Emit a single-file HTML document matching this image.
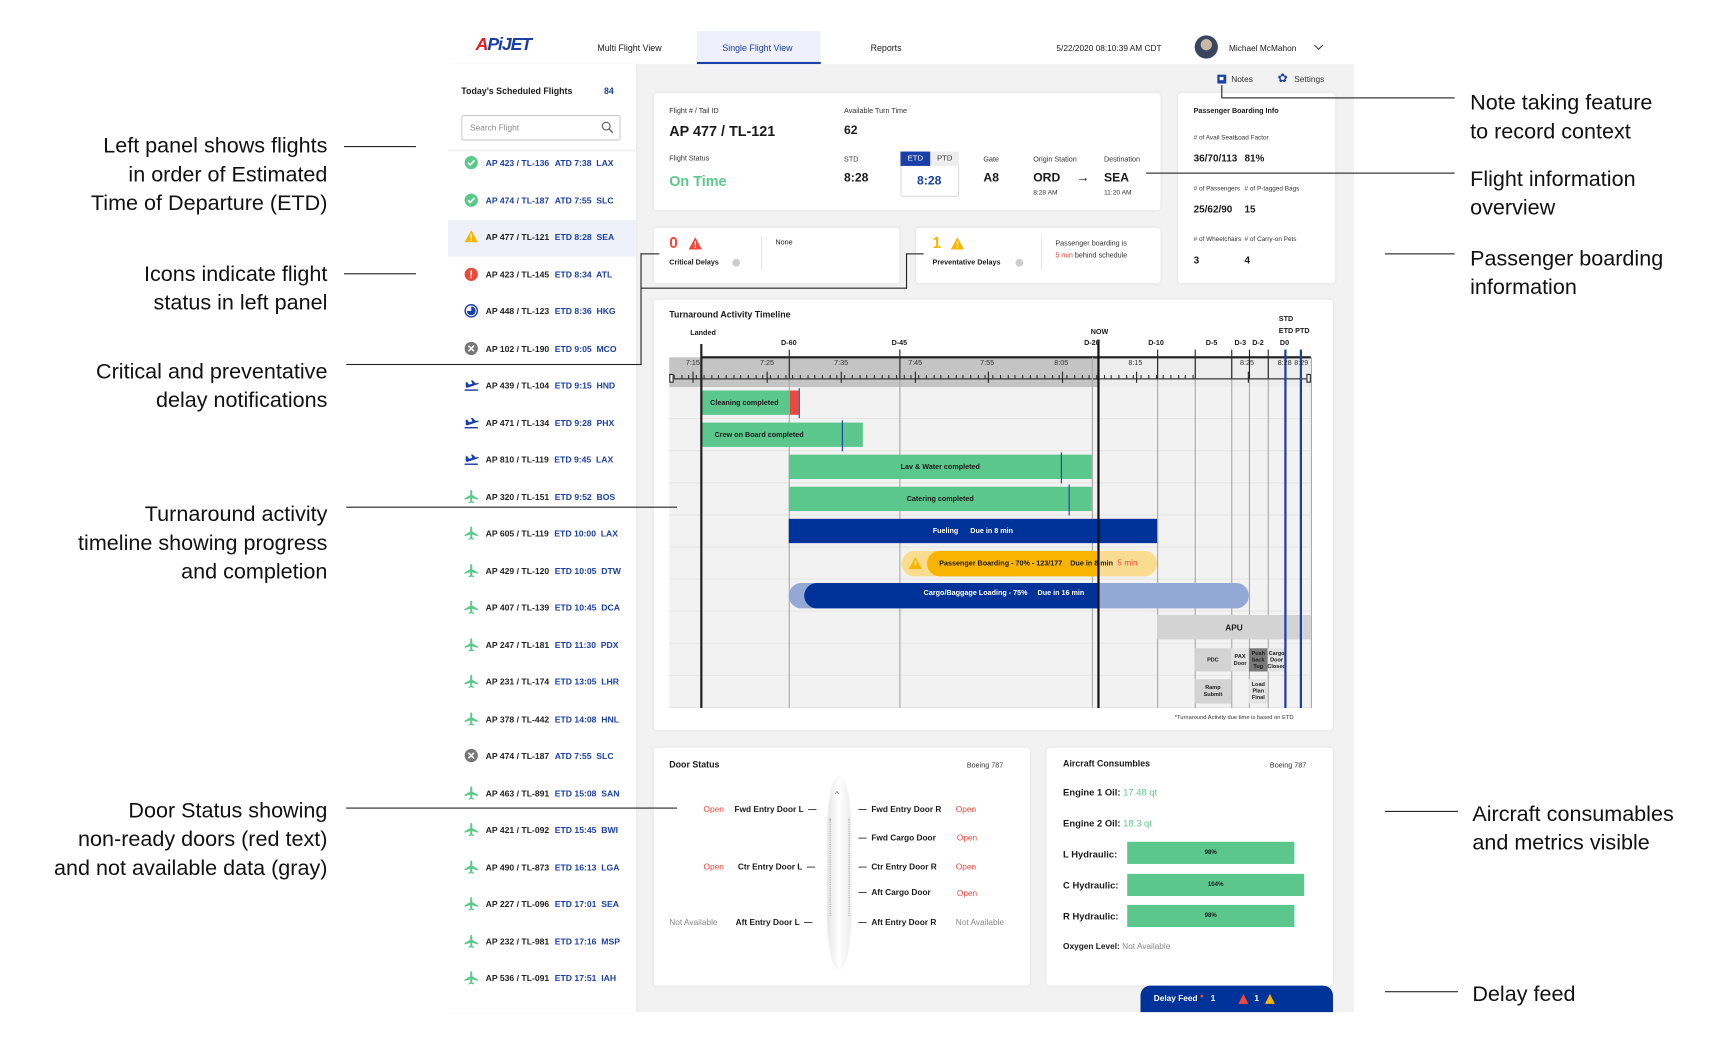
<!DOCTYPE html>
<html><head><meta charset="utf-8">
<style>
*{margin:0;padding:0;box-sizing:border-box}
html,body{width:1735px;height:1043px;overflow:hidden;background:#fff}
#w{position:absolute;left:0;top:0;width:1570px;height:943px;transform:scale(1.1062);transform-origin:0 0;font-family:"Liberation Sans Narrow","Liberation Sans",sans-serif;color:#1a1a1a}
.a{position:absolute;white-space:nowrap}
.ann{position:absolute;font-family:"Liberation Sans",sans-serif;font-size:19.5px;line-height:26px;color:#111}
.ln{position:absolute;background:#222;height:1.3px}
.vl{position:absolute;background:#222;width:1.3px}
.card{position:absolute;background:#fff;border-radius:3px;box-shadow:0 0 3px rgba(0,0,0,.08)}
.s8{font-size:8px}.s7{font-size:7px}
.b{font-weight:bold}
.blue{color:#1a3fa6}
.row{position:absolute;left:405px;width:170px;height:33px}
.row .t{position:absolute;left:34px;top:11px;font-size:7.8px;font-weight:bold;color:#222;font-family:"Liberation Sans",sans-serif}
.row .e{color:#1a3fa6;margin-left:5px}
.row svg{position:absolute;left:14px;top:8px}
.lane{position:absolute;left:605px;width:580px;height:29px;background:#f2f2f2;border-bottom:1.5px solid #e3e3e3}
.gl{position:absolute;width:1px;background:#a8a8a8;top:323px;height:317px}
.bar{position:absolute;height:22px;font-size:6.5px;font-weight:bold;display:flex;align-items:center;justify-content:center}
.tl{position:absolute;font-size:6.5px;color:#333;top:325px}
.dl{position:absolute;font-size:6.5px;font-weight:bold;top:307px}
.door{position:absolute;font-size:7.5px;font-weight:bold}
.red{color:#f0483a}
.gray{color:#888}
.sm{font-size:5.8px;color:#333}
</style></head><body><div id="w">

<!-- header -->
<div class="a" style="left:430px;top:32px;font-size:16px;font-weight:bold;font-style:italic;letter-spacing:-1px"><span style="color:#e21d25">A</span><span style="color:#1a3fa6">PiJET</span></div>
<div class="a s8" style="left:540px;top:39px">Multi Flight View</div>
<div class="a" style="left:630px;top:28px;width:112px;height:30px;background:#eef1fb;border-bottom:2.5px solid #1a3fa6"></div>
<div class="a s8 blue" style="left:653px;top:39px">Single Flight View</div>
<div class="a s8" style="left:787px;top:39px">Reports</div>
<div class="a s8" style="left:955px;top:39px;font-size:7.5px">5/22/2020 08:10:39 AM CDT</div>
<div class="a" style="left:1080px;top:32px;width:21px;height:21px;border-radius:50%;background:radial-gradient(circle at 50% 40%,#c9b8a8 0 30%,#3a4560 32%)"></div>
<div class="a s8" style="left:1111px;top:39px;font-size:7.5px">Michael McMahon</div>
<div class="a" style="left:1189px;top:38px;width:6px;height:6px;border-right:1px solid #444;border-bottom:1px solid #444;transform:rotate(45deg)"></div>

<!-- main bg -->
<div class="a" style="left:575px;top:58px;width:649px;height:857px;background:#f2f2f2"></div>
<!-- left panel -->
<div class="a" style="left:405px;top:58px;width:170px;height:857px;background:#fff;box-shadow:1px 0 2px rgba(0,0,0,.05)"></div>
<div class="a b" style="left:417px;top:78px;font-size:8px">Today's Scheduled Flights</div>
<div class="a b blue" style="left:546px;top:78px;font-size:8px">84</div>
<div class="a" style="left:417px;top:104px;width:144px;height:23px;border:1px solid #ccc;border-radius:2px"></div>
<div class="a s8" style="left:425px;top:111px;color:#888;font-size:7.5px">Search Flight</div>
<svg class="a" style="left:543px;top:109px" width="12" height="12"><circle cx="5" cy="5" r="3.5" fill="none" stroke="#666" stroke-width="1.1"/><line x1="7.5" y1="7.5" x2="11" y2="11" stroke="#666" stroke-width="1.2"/></svg>
<div class="a" style="left:405px;top:135px;width:170px;height:3px;background:linear-gradient(#eee,#fff)"></div>
<div class="a" style="left:405px;top:199px;width:170px;height:33px;background:#eef1fa"></div>

<div id="rows"></div>

<!-- notes -->
<svg class="a" style="left:1100px;top:67px" width="9" height="9"><rect x="0.5" y="0.5" width="8" height="8" fill="#1a3fa6"/><rect x="2.5" y="2.5" width="3.5" height="3" fill="#fff"/></svg>
<div class="a s8" style="left:1113px;top:67px;color:#333;font-size:7.5px">Notes</div>
<div class="a" style="left:1155px;top:64px;font-size:11px;color:#1a3fa6">✿</div>
<div class="a s8" style="left:1170px;top:67px;color:#333;font-size:7.5px">Settings</div>

<!-- flight info card -->
<div class="card" style="left:591px;top:84px;width:458px;height:106px"></div>
<div class="a" style="left:605px;top:97px;font-size:6.5px;color:#333">Flight # / Tail ID</div>
<div class="a b" style="left:605px;top:111px;font-size:13px">AP 477 / TL-121</div>
<div class="a" style="left:763px;top:97px;font-size:6.5px;color:#333">Available Turn Time</div>
<div class="a b" style="left:763px;top:112px;font-size:11px">62</div>
<div class="a" style="left:605px;top:140px;font-size:6.5px;color:#333">Flight Status</div>
<div class="a b" style="left:605px;top:156px;font-size:13px;color:#5cc98a">On Time</div>
<div class="a" style="left:763px;top:141px;font-size:6.5px;color:#333">STD</div>
<div class="a b" style="left:763px;top:155px;font-size:11px">8:28</div>
<div class="a" style="left:814px;top:137px;width:53px;height:41px;border:1px solid #ddd;border-radius:2px"></div>
<div class="a" style="left:814px;top:137px;width:27px;height:13px;background:#1a3fa6;color:#fff;font-size:7px;text-align:center;line-height:13px">ETD</div>
<div class="a" style="left:841px;top:137px;width:26px;height:13px;background:#eee;color:#333;font-size:7px;text-align:center;line-height:13px">PTD</div>
<div class="a b blue" style="left:829px;top:158px;font-size:11px">8:28</div>
<div class="a" style="left:889px;top:141px;font-size:6.5px;color:#333">Gate</div>
<div class="a b" style="left:889px;top:155px;font-size:11px">A8</div>
<div class="a" style="left:934px;top:141px;font-size:6.5px;color:#333">Origin Station</div>
<div class="a b" style="left:934px;top:155px;font-size:11px">ORD</div>
<div class="a b" style="left:973px;top:153px;font-size:12px">→</div>
<div class="a" style="left:998px;top:141px;font-size:6.5px;color:#333">Destination</div>
<div class="a b" style="left:998px;top:155px;font-size:11px">SEA</div>
<div class="a" style="left:934px;top:172px;font-size:6px;color:#333">8:28 AM</div>
<div class="a" style="left:998px;top:172px;font-size:6px;color:#333">11:20 AM</div>

<!-- pax card -->
<div class="card" style="left:1065px;top:84px;width:142px;height:172px"></div>
<div class="a b" style="left:1079px;top:97px;font-size:6.5px">Passenger Boarding Info</div>
<div class="a sm" style="left:1079px;top:122px"># of Avail Seats</div>
<div class="a sm" style="left:1116px;top:122px">Load Factor</div>
<div class="a b" style="left:1079px;top:138px;font-size:9px">36/70/113</div>
<div class="a b" style="left:1125px;top:138px;font-size:9px">81%</div>
<div class="a sm" style="left:1079px;top:168px"># of Passengers</div>
<div class="a sm" style="left:1125px;top:168px"># of P-tagged Bags</div>
<div class="a b" style="left:1079px;top:184px;font-size:9px">25/62/90</div>
<div class="a b" style="left:1125px;top:184px;font-size:9px">15</div>
<div class="a sm" style="left:1079px;top:214px"># of Wheelchairs</div>
<div class="a sm" style="left:1125px;top:214px"># of Carry-on Pets</div>
<div class="a b" style="left:1079px;top:230px;font-size:9px">3</div>
<div class="a b" style="left:1125px;top:230px;font-size:9px">4</div>

<!-- delays -->
<div class="card" style="left:591px;top:206px;width:222px;height:50px"></div>
<div class="a b red" style="left:605px;top:211px;font-size:14px">0</div>
<svg class="a" style="left:622px;top:214px" width="13" height="12"><path d="M6.5 0.5 L12.5 11.5 L0.5 11.5Z" fill="#f0483a"/><rect x="6" y="4" width="1.2" height="4" fill="#fff"/><rect x="6" y="9" width="1.2" height="1.2" fill="#fff"/></svg>
<div class="a b" style="left:605px;top:234px;font-size:6.5px">Critical Delays</div>
<div class="a" style="left:662px;top:234px;width:7px;height:7px;border-radius:50%;background:#ccc"></div>
<div class="a" style="left:688px;top:214px;width:1px;height:30px;background:#e5e5e5"></div>
<div class="a" style="left:701px;top:216px;font-size:6.5px">None</div>
<div class="card" style="left:828px;top:206px;width:221px;height:50px"></div>
<div class="a b" style="left:843px;top:211px;font-size:14px;color:#f7b500">1</div>
<svg class="a" style="left:859px;top:214px" width="13" height="12"><path d="M6.5 0.5 L12.5 11.5 L0.5 11.5Z" fill="#f7b500"/><rect x="6" y="4" width="1.2" height="4" fill="#fff"/><rect x="6" y="9" width="1.2" height="1.2" fill="#fff"/></svg>
<div class="a b" style="left:843px;top:234px;font-size:6.5px">Preventative Delays</div>
<div class="a" style="left:918px;top:234px;width:7px;height:7px;border-radius:50%;background:#ccc"></div>
<div class="a" style="left:941px;top:214px;width:1px;height:30px;background:#e5e5e5"></div>
<div class="a" style="left:954px;top:215px;line-height:11px;color:#333;font-size:6.5px">Passenger boarding is<br><span class="red">5 min</span> behind schedule</div>

<!-- timeline card -->
<div class="card" style="left:591px;top:271px;width:614px;height:389px"></div>
<div class="a b" style="left:605px;top:280px;font-size:8px">Turnaround Activity Timeline</div>
<div class="a" style="left:605px;top:323px;width:388px;height:27px;background:#c4c4c4"></div>
<div class="a" style="left:993px;top:323px;width:192px;height:27px;background:#ededed"></div>
<div class="a" style="left:634px;top:322px;width:551px;height:1.5px;background:#222"></div>
<div class="a" style="left:606px;top:342px;width:578px;height:1px;background:#222"></div>
<div id="lanes"></div>
<div id="grid"></div>
<div class="a" style="left:605px;top:338px;width:4px;height:8px;border:1px solid #222;background:#fff"></div>
<div class="a" style="left:1181px;top:338px;width:4px;height:8px;border:1px solid #222;background:#fff"></div>

<!-- bars -->
<div class="bar" style="left:634px;top:353px;width:80px;background:#5bc78d;justify-content:flex-start;padding-left:8px">Cleaning completed</div>
<div class="a" style="left:714px;top:353px;width:8px;height:22px;background:#ea4a3c"></div>
<div class="a" style="left:722px;top:351px;width:1px;height:27px;background:#1a3fa6"></div>
<div class="bar" style="left:634px;top:382px;width:146px;background:#5bc78d;justify-content:flex-start;padding-left:12px">Crew on Board completed</div>
<div class="a" style="left:761px;top:380px;width:1px;height:28px;background:#1a3fa6"></div>
<div class="bar" style="left:713px;top:411px;width:274px;background:#5bc78d">Lav &amp; Water completed</div>
<div class="a" style="left:959px;top:409px;width:1px;height:28px;background:#1a3fa6"></div>
<div class="bar" style="left:713px;top:440px;width:274px;background:#5bc78d">Catering completed</div>
<div class="a" style="left:966px;top:438px;width:1px;height:28px;background:#1a3fa6"></div>
<div class="bar" style="left:713px;top:469px;width:333px;background:#003399;color:#fff">Fueling &nbsp;&nbsp;&nbsp;&nbsp; Due in 8 min</div>
<div class="a" style="left:815px;top:498px;width:231px;height:23px;background:#f9dc8f;border-radius:12px"></div>
<div class="a" style="left:838px;top:498px;width:155px;height:23px;background:#f8b400;border-radius:12px 0 0 12px"></div>
<svg class="a" style="left:821px;top:503px" width="13" height="12"><path d="M6.5 0.5 L12.5 11.5 L0.5 11.5Z" fill="#f7b500"/><rect x="6" y="4" width="1.2" height="4" fill="#fff"/></svg>
<div class="a b" style="left:849px;top:504px;font-size:6.5px">Passenger Boarding - 70% - 123/177 &nbsp;&nbsp; Due in 8 min <span class="red" style="font-weight:normal;font-size:7.5px">&nbsp;5 min</span></div>
<div class="a" style="left:713px;top:527px;width:416px;height:23px;background:#93a8d4;border-radius:12px"></div>
<div class="a" style="left:727px;top:527px;width:266px;height:23px;background:#003399;border-radius:12px 0 0 12px"></div>
<div class="a b" style="left:835px;top:533px;color:#fff;font-size:6.5px">Cargo/Baggage Loading - 75% &nbsp;&nbsp;&nbsp; Due in 16 min</div>
<div class="bar" style="left:1046px;top:556px;width:139px;background:#d3d3d3;font-size:7.5px">APU</div>
<div class="bar" style="left:1080px;top:586px;width:33px;height:21px;background:#d3d3d3;font-size:5px">PDC</div>
<div class="bar" style="left:1113px;top:586px;width:16px;height:21px;background:#e3e3e3;font-size:5px;text-align:center;line-height:6px">PAX<br>Door</div>
<div class="bar" style="left:1129px;top:586px;width:17px;height:21px;background:#7a7a7a;font-size:5px;text-align:center;line-height:6px">Push<br>back<br>Tug</div>
<div class="bar" style="left:1146px;top:586px;width:16px;height:21px;background:#e3e3e3;font-size:5px;text-align:center;line-height:6px">Cargo<br>Door<br>Closed</div>
<div class="bar" style="left:1080px;top:614px;width:33px;height:22px;background:#d3d3d3;font-size:5px;text-align:center;line-height:6px">Ramp<br>Submit</div>
<div class="bar" style="left:1129px;top:614px;width:17px;height:22px;background:#e3e3e3;font-size:5px;text-align:center;line-height:6px">Load<br>Plan<br>Final</div>

<!-- strong lines -->
<div class="a" style="left:633px;top:311px;width:1.5px;height:329px;background:#222"></div>
<div class="a" style="left:992px;top:307px;width:2px;height:333px;background:#111"></div>
<div class="a" style="left:1161px;top:316px;width:2px;height:324px;background:#1a3fa6"></div>
<div class="a" style="left:1175px;top:316px;width:1.5px;height:324px;background:#1a3fa6"></div>
<div id="labels"></div>
<div class="a" style="left:1062px;top:646px;font-size:5.2px;color:#333">*Turnaround Activity due time is based on ETD</div>

<!-- door status -->
<div class="card" style="left:591px;top:676px;width:340px;height:215px"></div>
<div class="a b" style="left:605px;top:687px;font-size:8px">Door Status</div>
<div class="a" style="left:874px;top:689px;color:#333;font-size:6.5px">Boeing 787</div>
<div class="a" style="left:748px;top:703px;width:21px;height:172px;border-radius:50%/30%;background:linear-gradient(90deg,#e6e6e6,#fff 50%,#ececec);box-shadow:0 0 2px rgba(0,0,0,.15)"></div>
<div class="a" style="left:755px;top:715px;font-size:7px;color:#555">^</div>
<div class="a" style="left:750px;top:740px;width:0;height:88px;border-left:1px dotted #aaa"></div>
<div class="a" style="left:767px;top:740px;width:0;height:88px;border-left:1px dotted #aaa"></div>
<div class="door red" style="left:636px;top:727px;font-weight:normal">Open</div>
<div class="door" style="left:664px;top:727px">Fwd Entry Door L &nbsp;—</div>
<div class="door red" style="left:636px;top:779px;font-weight:normal">Open</div>
<div class="door" style="left:667px;top:779px">Ctr Entry Door L &nbsp;—</div>
<div class="door gray" style="left:605px;top:829px;font-weight:normal">Not Available</div>
<div class="door" style="left:665px;top:829px">Aft Entry Door L &nbsp;—</div>
<div class="door" style="left:776px;top:727px">— &nbsp;Fwd Entry Door R</div>
<div class="door red" style="left:864px;top:727px;font-weight:normal">Open</div>
<div class="door" style="left:776px;top:753px">— &nbsp;Fwd Cargo Door</div>
<div class="door red" style="left:865px;top:753px;font-weight:normal">Open</div>
<div class="door" style="left:776px;top:779px">— &nbsp;Ctr Entry Door R</div>
<div class="door red" style="left:864px;top:779px;font-weight:normal">Open</div>
<div class="door" style="left:776px;top:802px">— &nbsp;Aft Cargo Door</div>
<div class="door red" style="left:865px;top:803px;font-weight:normal">Open</div>
<div class="door" style="left:776px;top:829px">— &nbsp;Aft Entry Door R</div>
<div class="door gray" style="left:864px;top:829px;font-weight:normal">Not Available</div>

<!-- consumables -->
<div class="card" style="left:946px;top:676px;width:259px;height:215px"></div>
<div class="a b" style="left:961px;top:686px;font-size:8px">Aircraft Consumbles</div>
<div class="a" style="left:1148px;top:689px;color:#333;font-size:6.5px">Boeing 787</div>
<div class="a b" style="left:961px;top:711px;font-size:8.5px">Engine 1 Oil: <span style="color:#5cc98a;font-weight:normal">17.48 qt</span></div>
<div class="a b" style="left:961px;top:739px;font-size:8.5px">Engine 2 Oil: <span style="color:#5cc98a;font-weight:normal">18.3 qt</span></div>
<div class="a b" style="left:961px;top:767px;font-size:8.5px">L Hydraulic:</div>
<div class="a" style="left:1019px;top:761px;width:153px;height:20px;background:#e9f6ee"></div>
<div class="bar" style="left:1019px;top:761px;width:151px;height:20px;background:#5bc78d;font-size:5.5px">98%</div>
<div class="a b" style="left:961px;top:795px;font-size:8.5px">C Hydraulic:</div>
<div class="bar" style="left:1019px;top:790px;width:160px;height:20px;background:#5bc78d;font-size:5.5px">104%</div>
<div class="a b" style="left:961px;top:823px;font-size:8.5px">R Hydraulic:</div>
<div class="a" style="left:1019px;top:818px;width:153px;height:20px;background:#e9f6ee"></div>
<div class="bar" style="left:1019px;top:818px;width:151px;height:20px;background:#5bc78d;font-size:5.5px">98%</div>
<div class="a b" style="left:961px;top:851px;font-size:7.5px">Oxygen Level: <span class="gray" style="font-weight:normal">Not Available</span></div>
<div class="a" style="left:1031px;top:891px;width:174px;height:24px;background:#003399;border-radius:9px 9px 0 0"></div>
<div class="a b" style="left:1043px;top:898px;font-size:7.5px;color:#fff">Delay Feed <span style="color:#f0483a;font-size:6px;vertical-align:top">●</span> &nbsp; 1</div>
<svg class="a" style="left:1119px;top:898px" width="10" height="10"><path d="M5 0.5 L9.5 9.5 L0.5 9.5Z" fill="#f0483a"/></svg>
<div class="a b" style="left:1134px;top:898px;font-size:7.5px;color:#fff">1</div>
<svg class="a" style="left:1143px;top:898px" width="10" height="10"><path d="M5 0.5 L9.5 9.5 L0.5 9.5Z" fill="#f7b500"/></svg>

<!-- annotations left -->
<div class="ann" style="right:1274px;top:119px;text-align:right">Left panel shows flights<br>in order of Estimated<br>Time of Departure (ETD)</div>
<div class="ln" style="left:311px;top:132px;width:65px"></div>
<div class="ann" style="right:1274px;top:235px;text-align:right">Icons indicate flight<br>status in left panel</div>
<div class="ln" style="left:311px;top:247px;width:65px"></div>
<div class="ann" style="right:1274px;top:323px;text-align:right">Critical and preventative<br>delay notifications</div>
<div class="ln" style="left:313px;top:329px;width:267px"></div>
<div class="vl" style="left:579px;top:229px;height:101px"></div>
<div class="ln" style="left:579px;top:229px;width:17px"></div>
<div class="ln" style="left:579px;top:260px;width:241px"></div>
<div class="vl" style="left:819px;top:229px;height:32px"></div>
<div class="ln" style="left:819px;top:229px;width:16px"></div>
<div class="ann" style="right:1274px;top:452px;text-align:right">Turnaround activity<br>timeline showing progress<br>and completion</div>
<div class="ln" style="left:313px;top:458px;width:299px"></div>
<div class="ann" style="right:1274px;top:720px;text-align:right">Door Status showing<br>non-ready doors (red text)<br>and not available data (gray)</div>
<div class="ln" style="left:313px;top:730px;width:299px"></div>

<!-- annotations right -->
<div class="ann" style="left:1329px;top:80px">Note taking feature<br>to record context</div>
<div class="ann" style="left:1329px;top:149px">Flight information<br>overview</div>
<div class="ann" style="left:1329px;top:221px">Passenger boarding<br>information</div>
<div class="ann" style="left:1331px;top:723px">Aircraft consumables<br>and metrics visible</div>
<div class="ann" style="left:1331px;top:886px">Delay feed</div>
<div class="vl" style="left:1104px;top:77px;height:11px"></div>
<div class="ln" style="left:1104px;top:88px;width:211px"></div>
<div class="ln" style="left:1036px;top:156px;width:279px"></div>
<div class="ln" style="left:1252px;top:229px;width:63px"></div>
<div class="ln" style="left:1252px;top:733px;width:66px"></div>
<div class="ln" style="left:1252px;top:896px;width:66px"></div>

</div>
<script>
var rows=[["c","AP 423 / TL-136","ATD 7:38","LAX"],["c","AP 474 / TL-187","ATD 7:55","SLC"],["w","AP 477 / TL-121","ETD 8:28","SEA"],["r","AP 423 / TL-145","ETD 8:34","ATL"],["k","AP 448 / TL-123","ETD 8:36","HKG"],["x","AP 102 / TL-190","ETD 9:05","MCO"],["t","AP 439 / TL-104","ETD 9:15","HND"],["t","AP 471 / TL-134","ETD 9:28","PHX"],["t","AP 810 / TL-119","ETD 9:45","LAX"],["p","AP 320 / TL-151","ETD 9:52","BOS"],["p","AP 605 / TL-119","ETD 10:00","LAX"],["p","AP 429 / TL-120","ETD 10:05","DTW"],["p","AP 407 / TL-139","ETD 10:45","DCA"],["p","AP 247 / TL-181","ETD 11:30","PDX"],["p","AP 231 / TL-174","ETD 13:05","LHR"],["p","AP 378 / TL-442","ETD 14:08","HNL"],["x","AP 474 / TL-187","ATD 7:55","SLC"],["p","AP 463 / TL-891","ETD 15:08","SAN"],["p","AP 421 / TL-092","ETD 15:45","BWI"],["p","AP 490 / TL-873","ETD 16:13","LGA"],["p","AP 227 / TL-096","ETD 17:01","SEA"],["p","AP 232 / TL-981","ETD 17:16","MSP"],["p","AP 536 / TL-091","ETD 17:51","IAH"]];
var ic={c:'<circle cx="7" cy="7" r="6" fill="#5cc98a"/><path d="M4 7l2 2 4-4" stroke="#fff" stroke-width="1.5" fill="none"/>',
w:'<path d="M7 1L13 12H1Z" fill="#f7b500"/><rect x="6.4" y="4.5" width="1.2" height="4" fill="#fff"/><rect x="6.4" y="9.5" width="1.2" height="1.2" fill="#fff"/>',
r:'<circle cx="7" cy="7" r="6" fill="#ea4a3c"/><rect x="6.3" y="3.5" width="1.4" height="4.5" fill="#fff"/><rect x="6.3" y="9" width="1.4" height="1.4" fill="#fff"/>',
k:'<circle cx="7" cy="7" r="5.5" fill="none" stroke="#1a3fa6" stroke-width="1.3"/><path d="M7 3A4 4 0 1 1 3 7L7 7Z" fill="#1a3fa6"/>',
x:'<circle cx="7" cy="7" r="6" fill="#777"/><path d="M4.5 4.5l5 5M9.5 4.5l-5 5" stroke="#fff" stroke-width="1.4"/>',
t:'<path d="M2 4.5l1.5 0 1.5 2.2 3-.8-1.2-3 1.5 0 2.8 2.7 2-.5c.8 0 1 .9.2 1.2L3.5 9.5 2 9Z" fill="#1a3fa6"/><rect x="1" y="11" width="12" height="1.3" fill="#1a3fa6"/>',
p:'<path d="M7 1c.6 0 .9.6.9 1.2V5.5L13 8.5v1.3L7.9 8.3V11l1.6 1.2V13L7 12.3 4.5 13v-.8L6.1 11V8.3L1 9.8V8.5L6.1 5.5V2.2C6.1 1.6 6.4 1 7 1Z" fill="#5cc98a"/>'};
var h='';rows.forEach(function(r,i){var y=148+i*33.5-16;var blue=(r[0]=='c');h+='<div class="row" style="top:'+y+'px"><svg width="14" height="14">'+ic[r[0]]+'</svg><div class="t"'+(blue?' style="color:#1a3fa6"':'')+'>'+r[1]+'<span class="e">'+r[2]+'&nbsp; '+r[3]+'</span></div></div>';});
document.getElementById('rows').innerHTML=h;
var l='';for(var i=0;i<10;i++)l+='<div class="lane" style="top:'+(350+i*29)+'px"></div>';document.getElementById('lanes').innerHTML=l;
var g='';[713,813,987,1046,1080,1113,1129,1146,1185].forEach(function(x){g+='<div class="gl" style="left:'+x+'px"></div>';});
[1080,1113,1129,1146,713,813,1046].forEach(function(x){g+='<div class="a" style="left:'+x+'px;top:316px;width:1.3px;height:27px;background:#222"></div>';});
for(var x=609;x<1080;x+=6.7){g+='<div class="a" style="left:'+x+'px;top:339px;width:1px;height:4px;background:#333"></div>';}
[626,693,760,827,893,960,1027,1128].forEach(function(x){g+='<div class="a" style="left:'+x+'px;top:336px;width:1px;height:10px;background:#222"></div>';});
document.getElementById('grid').innerHTML=g;
var L='';[["7:15",620],["7:25",687],["7:35",754],["7:45",821],["7:55",886],["8:05",953],["8:15",1020],["8:25",1121],["8:28",1155],["8:29",1170]].forEach(function(t){L+='<div class="tl" style="left:'+t[1]+'px">'+t[0]+'</div>';});
[["Landed",624,298],["D-60",706,307],["D-45",806,307],["NOW",986,297],["D-20",980,307],["D-10",1038,307],["D-5",1090,307],["D-3",1116,307],["D-2",1132,307],["D0",1157,307],["STD",1156,285],["ETD PTD",1156,296]].forEach(function(t){L+='<div class="dl" style="left:'+t[1]+'px;top:'+t[2]+'px">'+t[0]+'</div>';});
document.getElementById('labels').innerHTML=L;
</script>
</body></html>
